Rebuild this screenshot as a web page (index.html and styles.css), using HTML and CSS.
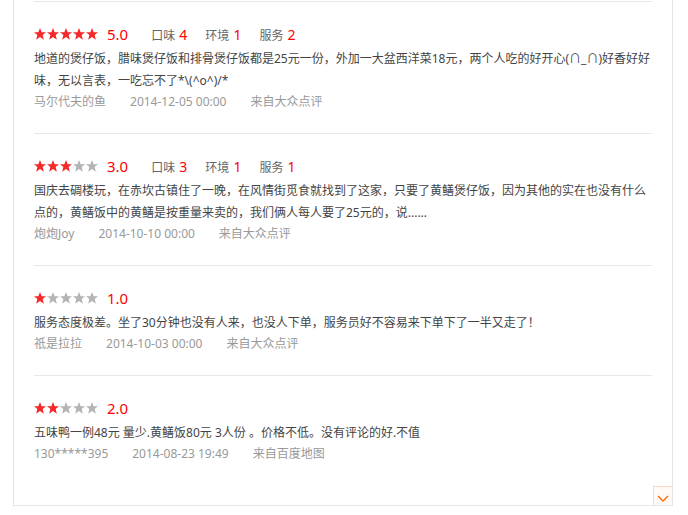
FILE: index.html
```html
<!DOCTYPE html>
<html lang="zh-CN">
<head>
    <meta charset="UTF-8">
    <title>评论</title>
    <link rel="stylesheet" href="styles.css">
</head>
<body>
    <!-- review list box -->
    <div class="review-box">
        <div class="review">
            <div class="score-row">
                <span class="stars"><i class="star on"></i><i class="star on"></i><i class="star on"></i><i class="star on"></i><i class="star on"></i></span>
                <span class="rating">5.0</span>
                <span class="sub">口味 <em>4</em></span>
                <span class="sub">环境 <em>1</em></span>
                <span class="sub">服务 <em>2</em></span>
            </div>
            <p class="content">地道的煲仔饭，腊味煲仔饭和排骨煲仔饭都是25元一份，外加一大盆西洋菜18元，两个人吃的好开心(∩_∩)好香好好味，无以言表，一吃忘不了*\(^o^)/*</p>
            <div class="meta"><span>马尔代夫的鱼</span><span>2014-12-05 00:00</span><span>来自大众点评</span></div>
        </div>

        <div class="review">
            <div class="score-row">
                <span class="stars"><i class="star on"></i><i class="star on"></i><i class="star on"></i><i class="star"></i><i class="star"></i></span>
                <span class="rating">3.0</span>
                <span class="sub">口味 <em>3</em></span>
                <span class="sub">环境 <em>1</em></span>
                <span class="sub">服务 <em>1</em></span>
            </div>
            <p class="content">国庆去碉楼玩，在赤坎古镇住了一晚，在风情街觅食就找到了这家，只要了黄鳝煲仔饭，因为其他的实在也没有什么点的，黄鳝饭中的黄鳝是按重量来卖的，我们俩人每人要了25元的，说......</p>
            <div class="meta"><span>炮炮Joy</span><span>2014-10-10 00:00</span><span>来自大众点评</span></div>
        </div>

        <div class="review">
            <div class="score-row">
                <span class="stars"><i class="star on"></i><i class="star"></i><i class="star"></i><i class="star"></i><i class="star"></i></span>
                <span class="rating">1.0</span>
            </div>
            <p class="content">服务态度极差。坐了30分钟也没有人来，也没人下单，服务员好不容易来下单下了一半又走了！</p>
            <div class="meta"><span>祇是拉拉</span><span>2014-10-03 00:00</span><span>来自大众点评</span></div>
        </div>

        <div class="review">
            <div class="score-row">
                <span class="stars"><i class="star on"></i><i class="star on"></i><i class="star"></i><i class="star"></i><i class="star"></i></span>
                <span class="rating">2.0</span>
            </div>
            <p class="content">五味鸭一例48元 量少.黄鳝饭80元 3人份 。价格不低。没有评论的好.不值</p>
            <div class="meta"><span>130*****395</span><span>2014-08-23 19:49</span><span>来自百度地图</span></div>
        </div>

        <!-- expand button in the corner -->
        <a class="more-btn" href="#">
            <svg width="18" height="18" viewBox="0 0 18 18"><polyline points="4,9 9,14 14,9" fill="none" stroke="#ff6600" stroke-width="1.3"/></svg>
        </a>
    </div>
</body>
</html>
```

FILE: styles.css
```css
body { margin: 0; background: #fff; font-family: "Noto Sans", "Noto Sans CJK SC", sans-serif; font-size: 12px; color: #333; }
.review-box { position: relative; width: 618px; margin-left: 13px; padding: 1px 20px 20px; border: 1px solid #e5e5e5; border-top: none; }
.review { border-top: 1px solid #e8e8e8; padding: 20px 0 21px; }
.score-row { display: flex; align-items: center; height: 24px; margin-bottom: 2px; }
.stars { display: flex; margin-right: 9px; }
.star { display: block; width: 12px; height: 12px; margin-right: 1px; background: #b4b4b4; clip-path: polygon(50% 0%, 64% 35%, 100% 36%, 72% 59%, 82% 98%, 50% 76%, 18% 98%, 28% 59%, 0% 36%, 36% 35%); }
.star:last-child { margin-right: 0; }
.star.on { background: #f5282a; }
.rating { font-size: 15px; color: #f00; margin-right: 23px; }
.sub { font-size: 12px; color: #666; margin-right: 18px; }
.sub em { font-style: normal; font-size: 14px; color: #f00; margin-left: 1px; }
.content { margin: 0; line-height: 22px; color: #444; }
.meta { line-height: 20px; color: #999; }
.meta span { margin-right: 24px; }
.more-btn { position: absolute; right: 0; bottom: 0; display: block; width: 18px; height: 18px; border-left: 1px solid #fcd9bf; border-top: 1px solid #fcd9bf; background: #fffaf6; }
.more-btn svg { display: block; }
```
